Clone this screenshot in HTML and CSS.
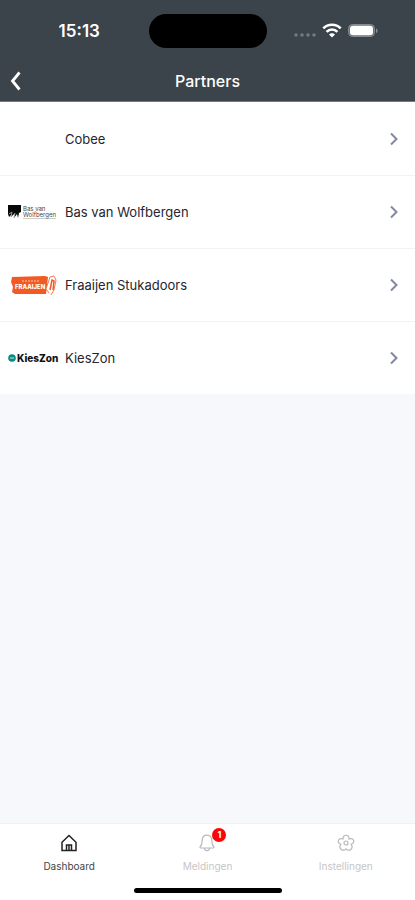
FILE: index.html
```html
<!DOCTYPE html>
<html lang="nl">
<head>
<meta charset="utf-8">
<meta name="viewport" content="width=device-width, initial-scale=1">
<title>Partners</title>
<link rel="stylesheet" href="styles.css">
</head>
<body>
<header class="header">
  <div class="status">
    <time class="clock">15:13</time>
    <div class="island"></div>
    <div class="indicators">
      <svg width="22" height="16" viewBox="0 0 22 16" fill="#727980"><circle cx="2" cy="12" r="1.800"/><circle cx="8" cy="12" r="1.800"/><circle cx="14" cy="12" r="1.800"/><circle cx="20" cy="12" r="1.800"/></svg>
      <svg width="20" height="16" viewBox="0 0 20 16" fill="none" stroke="#fff" stroke-width="2.600"><path d="M1.300 5.400a12.300 12.300 0 0 1 17.400 0M4.600 8.800a7.600 7.600 0 0 1 10.800 0"/><path d="M7 11.400a4.200 4.200 0 0 1 6 0L10 14.400z" fill="#fff" stroke="none"/></svg>
      <svg width="30" height="16" viewBox="0 0 30 16"><rect x="0.500" y="1.500" width="26" height="12" rx="4" fill="#6b7278" stroke="#858b90"/><rect x="2" y="2.800" width="23" height="9.500" rx="3" fill="#fff"/><path d="M28 5.500v4.500c2-.6 2-3.900 0-4.500z" fill="#8b9196"/></svg>
    </div>
  </div>
  <div class="navbar">
    <button class="back" type="button" aria-label="Terug"><svg width="12" height="20" viewBox="0 0 12 20" fill="none" stroke="#fff" stroke-width="2.800"><path d="M9.500 1.500 2.500 10l7 8.500"/></svg></button>
    <h1 class="title">Partners</h1>
  </div>
</header>
<main class="content">
  <ul class="partners">
    <li><a class="partner" href="#"><span class="logo"></span><span class="name">Cobee</span><svg class="chevron" viewBox="0 0 8 14"><path d="m1 1.500 5.500 5.500L1 12.500"/></svg></a></li>
    <li><a class="partner" href="#"><span class="logo logo-bas"><svg width="13" height="14" viewBox="0 0 13 14"><path d="M0 0h13v7l-2 1-1 5-1-4-3 4 1-5-4 4 1-3-3 3-1-3z" fill="#080808"/><path d="m1 9 3-2-1 5M7 8l-1 5" stroke="#999" fill="none"/></svg><span class="bas-text">Bas van<br>Wolfbergen</span></span><span class="name">Bas van Wolfbergen</span><svg class="chevron" viewBox="0 0 8 14"><path d="m1 1.500 5.500 5.500L1 12.500"/></svg></a></li>
    <li><a class="partner" href="#"><span class="logo"><svg class="fraaijen" width="46" height="21" viewBox="0 0 46 21"><path d="M1 2 34 1l3 1-2 17H4l-3-2 1-5-2-5z" fill="#f15a24"/><path d="M38 18 35 14l4-12 4-1 2 4-2 10-3 5" fill="#fff" stroke="#f47b50"/><path d="M39 15 41 5l2 1-1 9" fill="none" stroke="#f15a24" stroke-width="1.500"/><path d="M11 6h17" stroke="#fbc5b2" stroke-dasharray="2 1"/><text x="4" y="14">FRAAIJEN</text></svg></span><span class="name">Fraaijen Stukadoors</span><svg class="chevron" viewBox="0 0 8 14"><path d="m1 1.500 5.500 5.500L1 12.500"/></svg></a></li>
    <li><a class="partner" href="#"><span class="logo logo-kies"><svg width="8" height="8" viewBox="0 0 8 8"><circle cx="4" cy="4" r="3.800" fill="#078b83"/><path d="M2 4h4" stroke="#a8e0da" stroke-width="1.200"/></svg><span>KiesZon</span></span><span class="name">KiesZon</span><svg class="chevron" viewBox="0 0 8 14"><path d="m1 1.500 5.500 5.500L1 12.500"/></svg></a></li>
  </ul>
</main>
<footer class="footer">
  <nav class="tabs">
    <a class="tab active" href="#"><span class="icon"><svg width="18" height="18" viewBox="0 0 18 18"><path d="M2 8.200 9 1.500l7 6.700V16.500H2zM6.500 16.500v-5.500h5v5.500M9 11v5"/></svg></span>Dashboard</a>
    <a class="tab" href="#"><span class="icon"><svg width="18" height="18" viewBox="0 0 18 18"><path d="M9 1.200c-3.200 0-4.800 2.200-4.800 5.300 0 3.700-.7 5-2.200 6.500 0 .8.400 1 1 1h12c.6 0 1-.2 1-1-1.500-1.500-2.200-2.800-2.200-6.500 0-3.100-1.600-5.300-4.800-5.300zM6.500 14.200c.3 3.200 4.700 3.200 5 0"/></svg><span class="badge">1</span></span>Meldingen</a>
    <a class="tab" href="#"><span class="icon"><svg width="18" height="18" viewBox="0 0 18 18"><path d="M6 5C5.500 0 12.500 0 12 5c5-1.500 6.500 3.500 2.200 5.300 2.800 4.500-2.200 7.700-5.200 4.500-3 3.200-8 0-5.200-4.500C-.5 8.500 1 3.500 6 5z"/><circle cx="9" cy="9" r="2"/></svg></span>Instellingen</a>
  </nav>
  <div class="home-bar"></div>
</footer>
</body>
</html>
```
FILE: styles.css
```css
* { box-sizing: border-box; }
body {
  margin: 0;
  min-height: 100vh;
  display: flex;
  flex-direction: column;
  background: #f6f8fc;
  color: #25252f;
  font-family: Inter, "Liberation Sans", sans-serif;
}
svg { display: block; flex-shrink: 0; }
a { color: inherit; text-decoration: none; }
.header { background: #3c444b; color: #fff; border-bottom: 1px solid #737980; }
.status {
  height: 61px;
  display: grid;
  grid-template-columns: 1fr 118px 1fr;
  align-items: center;
}
.clock { padding-left: 10px; text-align: center; font-size: 17px; font-weight: 600; }
.island { height: 34px; border-radius: 17px; background: #000; }
.indicators { display: flex; align-items: center; justify-content: flex-end; gap: 6px; padding-right: 37px; }
.navbar { height: 40px; display: grid; grid-template-columns: 48px 1fr 48px; align-items: center; }
.back { border: 0; background: none; padding: 0 0 0 10px; height: 40px; display: flex; align-items: center; }
.title { margin: 0; text-align: center; font-size: 16px; line-height: 20px; font-weight: 500; }
.content { flex: 1; }
.partners { list-style: none; margin: 0; padding: 0; background: #fff; }
.partner {
  display: flex;
  align-items: center;
  gap: 8px;
  min-height: 73px;
  padding: 0 17px 0 8px;
}
.partners li + li .partner { border-top: 1px solid #f3f3f5; }
.logo { width: 49px; display: flex; align-items: center; justify-content: flex-end; flex-shrink: 0; }
.logo-bas { justify-content: flex-start; gap: 2px; }
.bas-text { font-size: 6px; line-height: 6px; color: #444; border-bottom: 1px solid #ccc; }
.fraaijen text { fill: #fff; font-size: 6px; font-weight: 800; }
.logo-kies { justify-content: flex-start; gap: 1px; font-size: 10px; font-weight: 800; color: #111; }
.name { flex: 1; font-size: 13px; line-height: 18px; }
.chevron { width: 8px; height: 14px; fill: none; stroke: #8288a0; stroke-width: 2; }
.footer { background: #fff; border-top: 1px solid #f0f1f5; padding-bottom: 7px; }
.tabs { display: grid; grid-template-columns: repeat(3, 1fr); height: 64px; padding-top: 10px; }
.tab { display: flex; flex-direction: column; align-items: center; gap: 8px; font-size: 10px; line-height: 12px; color: #c6c6c6; }
.active { color: #444; }
.icon { position: relative; }
.icon svg { fill: none; stroke: #b8b8b8; stroke-width: 1.2; }
.active .icon svg { stroke: #222; stroke-width: 1.5; }
.badge {
  position: absolute;
  left: 14px;
  top: -6px;
  width: 14px;
  height: 14px;
  border-radius: 50%;
  background: #fb0508;
  color: #fff;
  font-size: 9px;
  line-height: 14px;
  font-weight: 700;
  text-align: center;
}
.home-bar { width: 148px; height: 5px; border-radius: 3px; background: #000; margin: 0 auto; }
```
